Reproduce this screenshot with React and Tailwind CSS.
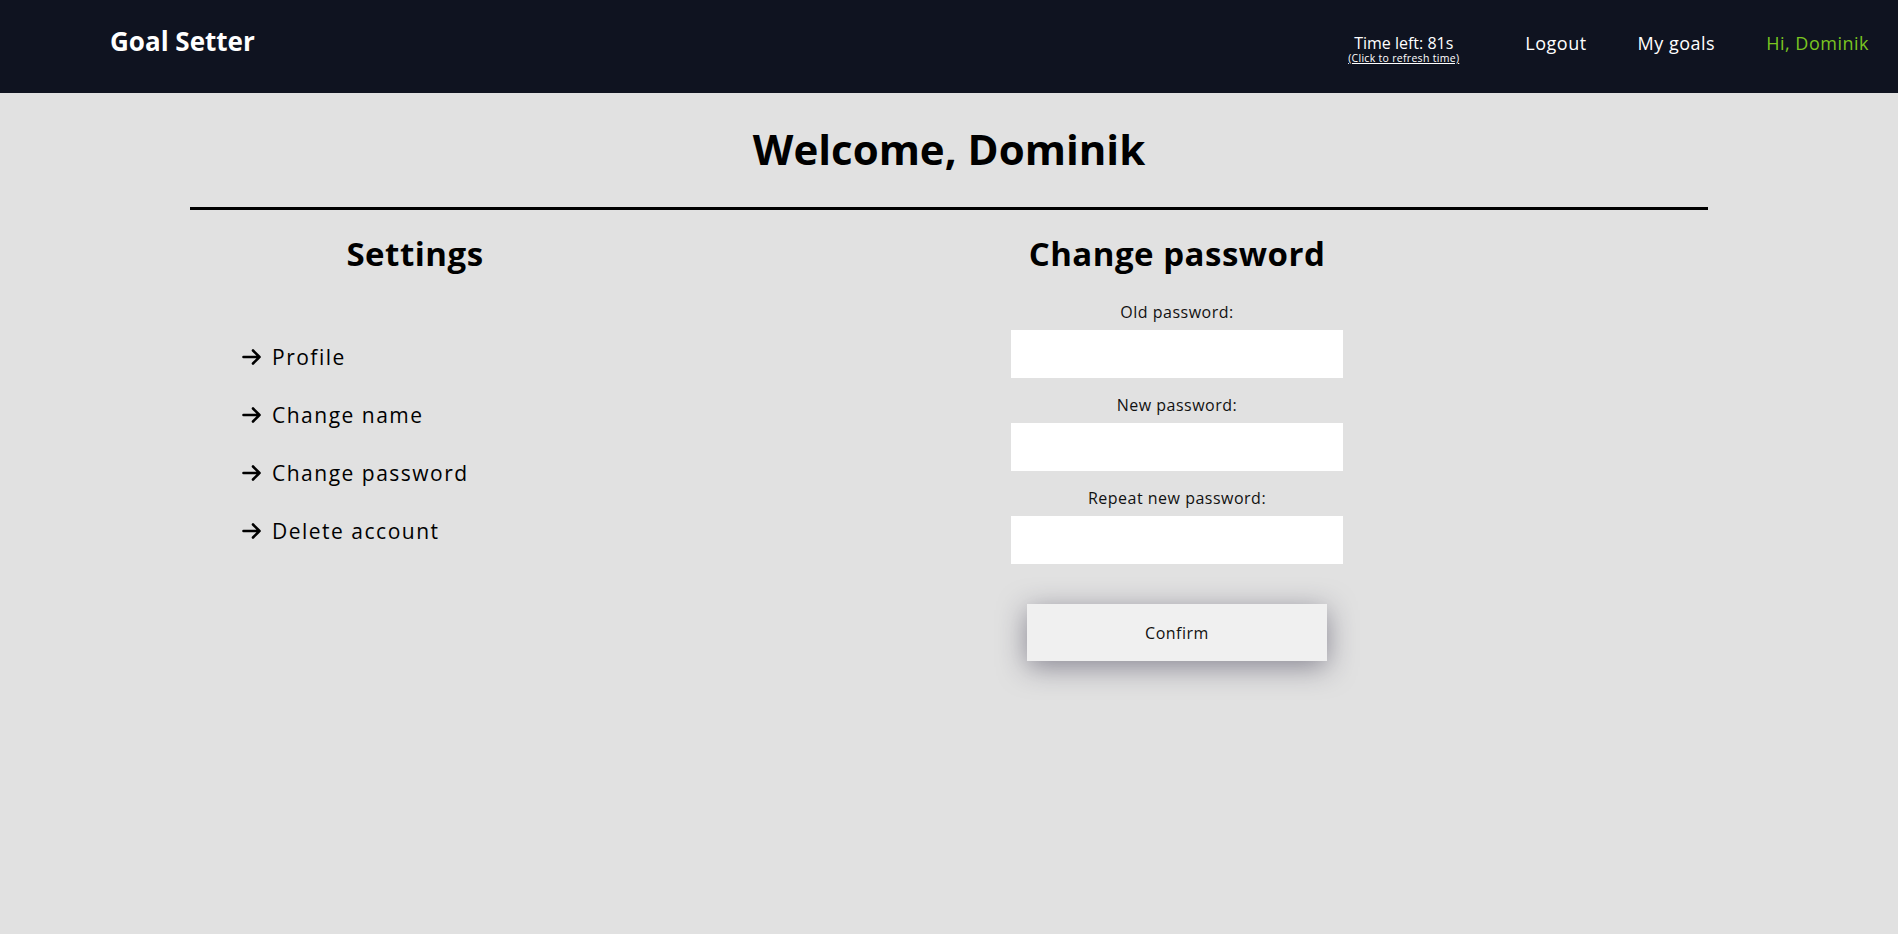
import React, { useState } from 'react';

// Settings page - change password form
const MENU = ['Profile', 'Change name', 'Change password', 'Delete account'];
const FIELDS = ['Old password:', 'New password:', 'Repeat new password:'];

const App = () => {
  const [values, setValues] = useState(['', '', '']);

  const update = (i, v) => {
    const next = [...values];
    next[i] = v;
    setValues(next);
  };

  return (
    <div className="min-h-[934px] bg-[#e1e1e1] font-['Open_Sans',sans-serif] text-black">
      {/* Header */}
      <header className="h-[93px] bg-[#0f1320] flex items-center justify-between pl-[110px] pr-[29px] pb-[7px]">
        <div className="text-white font-bold text-[26px] leading-none -mt-[4px]">Goal Setter</div>
        <nav className="flex items-center text-[18px] leading-none tracking-[0.5px]">
          <div className="flex flex-col items-center leading-none mr-[66px] mt-[12px] tracking-normal">
            <span className="text-white text-[16px]">Time left: 81s</span>
            <span className="text-white text-[10.5px] tracking-[0.3px] underline mt-[2px]">(Click to refresh time)</span>
          </div>
          <a className="text-white mr-[51px]">Logout</a>
          <a className="text-white mr-[51px]">My goals</a>
          <a className="text-[#7ac520]">Hi, Dominik</a>
        </nav>
      </header>

      {/* Title */}
      <h1 className="text-center font-bold text-[42px] leading-none pt-[35px] pb-[37px]">Welcome, Dominik</h1>
      <div className="w-[80%] mx-auto h-[3px] bg-black" />

      <div className="flex">
        {/* Settings menu */}
        <div className="w-[762px] ml-[34px]">
          <h2 className="text-center font-bold text-[33px] leading-none tracking-[0.5px] pt-[27px]">Settings</h2>
          <ul className="pl-[208px] pt-[73px] flex flex-col gap-[30px]">
            {MENU.map(item => (
              <li key={item} className="flex items-center text-[21px] leading-[28px] tracking-[1.5px]">
                <svg width="20" height="16" viewBox="0 0 20 16" className="mr-[10px]">
                  <path d="M1.5 8h16M11 1.5l6.5 6.5-6.5 6.5" fill="none" stroke="black" strokeWidth="2.6" strokeLinecap="round" strokeLinejoin="round" />
                </svg>
                {item}
              </li>
            ))}
          </ul>
        </div>

        {/* Change password form */}
        <div className="w-[762px] flex flex-col items-center">
          <h2 className="text-center font-bold text-[33px] leading-none tracking-[0.5px] pt-[27px]">Change password</h2>
          <form className="flex flex-col items-center pt-[31px]" onSubmit={(e) => e.preventDefault()}>
            {FIELDS.map((label, i) => (
              <div key={label} className="flex flex-col items-center mb-[16px]">
                <label className="text-[16px] leading-[22px] tracking-[0.5px] mb-[7px] text-[#111]">{label}</label>
                <input
                  type="password"
                  value={values[i]}
                  onChange={(e) => update(i, e.target.value)}
                  className="w-[332px] h-[48px] bg-white outline-none px-3"
                />
              </div>
            ))}
            <button
              type="submit"
              className="mt-[24px] w-[300px] h-[57px] bg-[#f0f0f0] text-[16px] tracking-[0.5px] text-[#111] shadow-[0_6px_28px_rgba(50,45,70,0.5)]"
            >
              Confirm
            </button>
          </form>
        </div>
      </div>
    </div>
  );
};

export default App;
